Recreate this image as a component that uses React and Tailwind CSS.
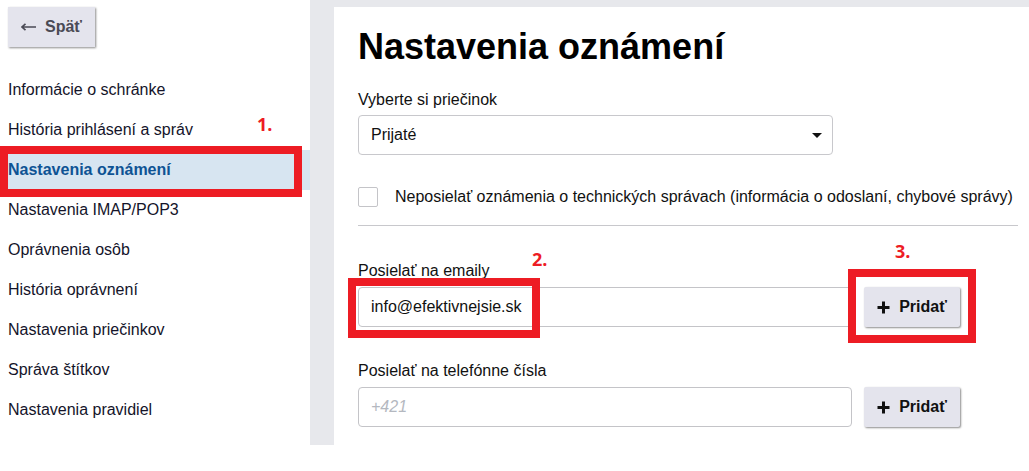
const menu = [
  "Informácie o schránke",
  "História prihlásení a správ",
  "Nastavenia oznámení",
  "Nastavenia IMAP/POP3",
  "Oprávnenia osôb",
  "História oprávnení",
  "Nastavenia priečinkov",
  "Správa štítkov",
  "Nastavenia pravidiel",
];

function PlusIcon() {
  return (
    <svg width="13" height="13" viewBox="0 0 13 13" className="shrink-0">
      <path d="M6.5 0.5v12M0.5 6.5h12" stroke="#111" strokeWidth="3" />
    </svg>
  );
}

function AddButton() {
  return (
    <button
      type="button"
      className="flex h-10 w-24 shrink-0 items-center justify-center gap-[9px] rounded-[2px] bg-[#e4e4ed] text-[16px] font-bold text-[#111] shadow-[1px_1px_2px_rgba(0,0,0,0.45)]"
    >
      <PlusIcon />
      Pridať
    </button>
  );
}

function Marker({ className }) {
  return <div className={`pointer-events-none absolute border-[8px] border-[#ed1c24] ${className}`} />;
}

function Tag({ children, className }) {
  return (
    <span
      className={`absolute font-['Open_Sans',sans-serif] text-[18px] leading-none font-bold text-[#ed1c24] ${className}`}
    >
      {children}
    </span>
  );
}

export default function App() {
  return (
    <div className="relative flex h-[445px] bg-white font-['Liberation_Sans',Arial,sans-serif] text-[16px]">
      <aside className="w-[310px] shrink-0 bg-white">
        <button
          type="button"
          className="ml-2 mt-[7px] flex h-10 w-[87px] items-center gap-[9px] bg-[#e4e4ed] pl-[13px] text-[16px] font-bold text-[#4a4a55] shadow-[1px_1px_2px_rgba(0,0,0,0.45)]"
        >
          <svg width="15" height="8" viewBox="0 0 15 8">
            <path d="M1 4h14M4.5 0.8L1 4l3.5 3.2" fill="none" stroke="#4a4a55" strokeWidth="1.6" />
          </svg>
          Späť
        </button>

        <nav className="mt-[23px] flex flex-col">
          {menu.map((item) => (
            <div
              key={item}
              className={
                item === "Nastavenia oznámení"
                  ? "flex h-10 items-center bg-[#d7e5f1] pl-2 font-bold text-[#0e5394]"
                  : "flex h-10 items-center pl-2 text-[#14142a]"
              }
            >
              {item}
            </div>
          ))}
        </nav>
      </aside>

      <div className="flex-1 bg-[#e7e8ec] pl-6 pt-[7px]">
        <main className="h-full bg-white pl-6 pr-[11px] pt-5 text-[#111]">
          <h1 className="text-[36px] leading-10 font-bold text-black">Nastavenia oznámení</h1>

          <p className="mt-[21px] leading-6">Vyberte si priečinok</p>
          <div className="mt-[3px] flex h-10 w-[475px] items-center justify-between rounded-[4px] border border-[#c8c8cc] pl-3 pr-[10px]">
            <span>Prijaté</span>
            <svg width="10" height="5" viewBox="0 0 10 5">
              <path d="M0 0h10L5 5z" fill="#111" />
            </svg>
          </div>

          <label className="mt-8 flex h-5 items-center">
            <span className="h-5 w-5 shrink-0 rounded-[2px] border border-[#c4c4c8] bg-white" />
            <span className="ml-[17px] whitespace-nowrap">
              Neposielať oznámenia o technických správach (informácia o odoslaní, chybové správy)
            </span>
          </label>

          <div className="mt-[18px] border-t border-[#c8c8cc]" />

          <p className="mt-[33px] leading-6">Posielať na emaily</p>
          <div className="mt-1 flex gap-3">
            <div className="flex h-10 w-[494px] items-center rounded-[4px] border border-[#c4c4c8] pl-3">
              info@efektivnejsie.sk
            </div>
            <AddButton />
          </div>

          <p className="mt-8 leading-6">Posielať na telefónne čísla</p>
          <div className="mt-1 flex gap-3">
            <div className="flex h-10 w-[494px] items-center rounded-[4px] border border-[#c4c4c8] pl-3 italic text-[#b4b8c0]">
              +421
            </div>
            <AddButton />
          </div>
        </main>
      </div>

      <Marker className="left-0 top-[146px] h-[51px] w-[302px]" />
      <Tag className="left-[257px] top-[115px]">1.</Tag>

      <Marker className="left-[348px] top-[278px] h-[60px] w-[192px]" />
      <Tag className="left-[532px] top-[250px]">2.</Tag>

      <Marker className="left-[848px] top-[269px] h-[74px] w-[128px]" />
      <Tag className="left-[895px] top-[242px]">3.</Tag>
    </div>
  );
}
